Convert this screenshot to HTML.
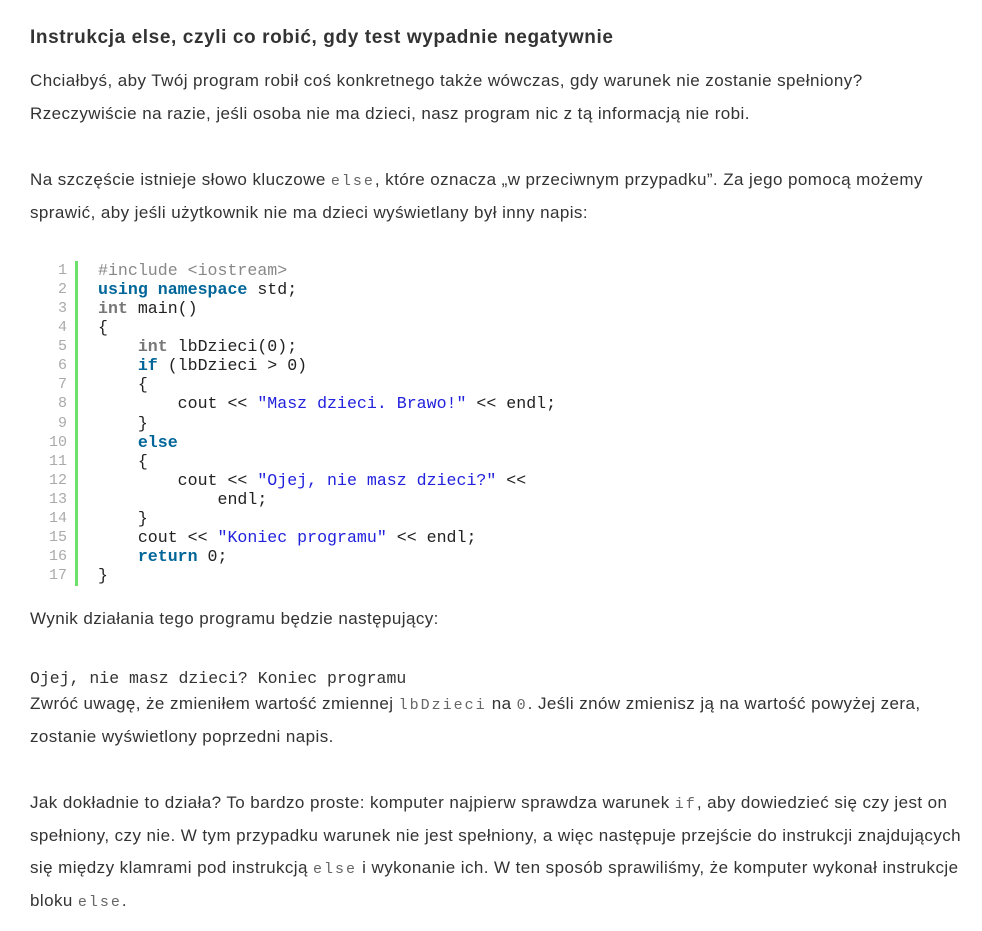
<!DOCTYPE html>
<html><head><meta charset="utf-8"><style>
body{margin:0;width:982px;height:931px;background:#fff;position:relative;font-family:"Liberation Sans",Arial,sans-serif;color:#333;overflow:hidden}
.l{position:absolute;left:30px;font-size:17px;letter-spacing:0.42px;line-height:20px;white-space:nowrap}
h1{position:absolute;left:30px;top:26px;margin:0;font-size:19px;letter-spacing:0.6px;line-height:24px;font-weight:bold;color:#333}
code{font-family:"Liberation Mono",monospace;font-size:15px;letter-spacing:2px;color:#666}
#nums{position:absolute;left:30px;top:261px;width:37px;text-align:right;color:#aaa;font-family:"Liberation Mono",monospace;font-size:15px;line-height:19.06px}
#bar{position:absolute;left:75px;top:261px;width:3px;height:325px;background:#6ce26c}
#src{position:absolute;left:98px;top:261px;white-space:pre;font-family:"Liberation Mono",monospace;font-size:16.6px;line-height:19.06px;color:#222}
.k{color:#069;font-weight:bold}.t{color:#777;font-weight:bold}.s{color:#22d}.p{color:#888}
</style></head><body>
<h1>Instrukcja else, czyli co robić, gdy test wypadnie negatywnie</h1>
<div class="l" style="top:71px">Chciałbyś, aby Twój program robił coś konkretnego także wówczas, gdy warunek nie zostanie spełniony?</div>
<div class="l" style="top:104px">Rzeczywiście na razie, jeśli osoba nie ma dzieci, nasz program nic z tą informacją nie robi.</div>
<div class="l" style="top:170px">Na szczęście istnieje słowo kluczowe <code>else</code>, które oznacza „w przeciwnym przypadku”. Za jego pomocą możemy</div>
<div class="l" style="top:203px">sprawić, aby jeśli użytkownik nie ma dzieci wyświetlany był inny napis:</div>
<div id="nums">1<br>2<br>3<br>4<br>5<br>6<br>7<br>8<br>9<br>10<br>11<br>12<br>13<br>14<br>15<br>16<br>17</div>
<div id="bar"></div>
<div id="src"><span class="p">#include &lt;iostream&gt;</span>
<span class="k">using namespace</span> std;
<span class="t">int</span> main()
{
    <span class="t">int</span> lbDzieci(0);
    <span class="k">if</span> (lbDzieci &gt; 0)
    {
        cout &lt;&lt; <span class="s">"Masz dzieci. Brawo!"</span> &lt;&lt; endl;
    }
    <span class="k">else</span>
    {
        cout &lt;&lt; <span class="s">"Ojej, nie masz dzieci?"</span> &lt;&lt;
            endl;
    }
    cout &lt;&lt; <span class="s">"Koniec programu"</span> &lt;&lt; endl;
    <span class="k">return</span> 0;
}</div>
<div class="l" style="top:609px">Wynik działania tego programu będzie następujący:</div>
<div class="l" style="top:669px;font-family:'Liberation Mono',monospace;font-size:16.5px;letter-spacing:0;color:#333">Ojej, nie masz dzieci? Koniec programu</div>
<div class="l" style="top:694px">Zwróć uwagę, że zmieniłem wartość zmiennej <code>lbDzieci</code> na <code>0</code>. Jeśli znów zmienisz ją na wartość powyżej zera,</div>
<div class="l" style="top:727px">zostanie wyświetlony poprzedni napis.</div>
<div class="l" style="top:793px">Jak dokładnie to działa? To bardzo proste: komputer najpierw sprawdza warunek <code>if</code>, aby dowiedzieć się czy jest on</div>
<div class="l" style="top:826px">spełniony, czy nie. W tym przypadku warunek nie jest spełniony, a więc następuje przejście do instrukcji znajdujących</div>
<div class="l" style="top:858px">się między klamrami pod instrukcją <code>else</code> i wykonanie ich. W ten sposób sprawiliśmy, że komputer wykonał instrukcje</div>
<div class="l" style="top:891px">bloku <code>else</code>.</div>
</body></html>
